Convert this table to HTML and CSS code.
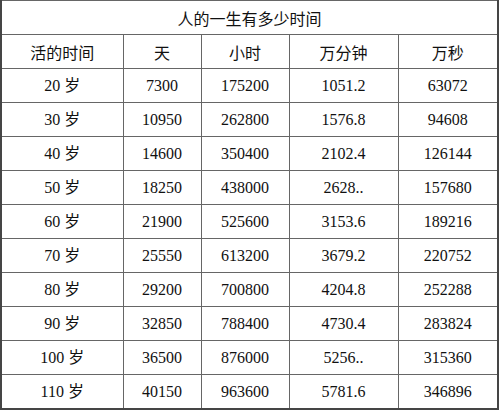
FILE: index.html
```html
<!DOCTYPE html>
<html lang="zh">
<head>
<meta charset="utf-8">
<link rel="stylesheet" href="styles.css">
</head>
<body>
<table class="life">
  <colgroup>
    <col class="c1"><col class="c2"><col class="c3"><col class="c4"><col class="c5">
  </colgroup>
  <tr class="title"><td colspan="5">人的一生有多少时间</td></tr>
  <tr class="head"><td>活的时间</td><td>天</td><td>小时</td><td>万分钟</td><td>万秒</td></tr>
  <tr><td>20 岁</td><td>7300</td><td>175200</td><td>1051.2</td><td>63072</td></tr>
  <tr><td>30 岁</td><td>10950</td><td>262800</td><td>1576.8</td><td>94608</td></tr>
  <tr><td>40 岁</td><td>14600</td><td>350400</td><td>2102.4</td><td>126144</td></tr>
  <tr><td>50 岁</td><td>18250</td><td>438000</td><td>2628..</td><td>157680</td></tr>
  <tr><td>60 岁</td><td>21900</td><td>525600</td><td>3153.6</td><td>189216</td></tr>
  <tr><td>70 岁</td><td>25550</td><td>613200</td><td>3679.2</td><td>220752</td></tr>
  <tr><td>80 岁</td><td>29200</td><td>700800</td><td>4204.8</td><td>252288</td></tr>
  <tr><td>90 岁</td><td>32850</td><td>788400</td><td>4730.4</td><td>283824</td></tr>
  <tr><td>100 岁</td><td>36500</td><td>876000</td><td>5256..</td><td>315360</td></tr>
  <tr><td>110 岁</td><td>40150</td><td>963600</td><td>5781.6</td><td>346896</td></tr>
</table>
</body>
</html>
```
FILE: styles.css
```css
html, body {
  margin: 0;
  padding: 0;
  background: #ffffff;
}
.life {
  border-collapse: collapse;
  table-layout: fixed;
  width: 499px;
  border: 2px solid #454545;
  border-top-width: 1px;
  font-family: "Liberation Serif", "Noto Sans CJK SC", serif;
  font-size: 16px;
  color: #111111;
}
.c1 { width: 122px; }
.c2 { width: 78px; }
.c3 { width: 88px; }
.c4 { width: 109px; }
.c5 { width: 100px; }
.life td {
  border: 1px solid #666666;
  height: 33px;
  padding: 0;
  text-align: center;
  vertical-align: middle;
  line-height: 1;
}
.life .title td,
.life .head td {
  font-family: "Noto Sans CJK SC", sans-serif;
  font-size: 16px;
}
```
